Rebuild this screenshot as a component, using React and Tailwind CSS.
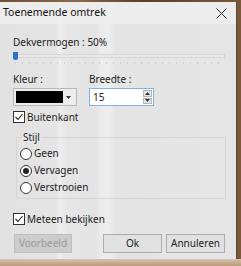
export default function App() {
  const font = { fontFamily: '"Segoe UI", "Noto Sans", "Open Sans", sans-serif' };
  const Check = () => (
    <div className="w-[12px] h-[12px] border border-[#333] bg-white flex items-center justify-center">
      <svg width="10" height="10" viewBox="0 0 10 10"><path d="M1.5 5 L4 7.5 L8.5 2" stroke="#222" strokeWidth="1.1" fill="none" /></svg>
    </div>
  );
  return (
    <div
      className="w-[241px] h-[266px] overflow-hidden bg-[linear-gradient(90deg,#6a5038_0%,#8a6a48_30%,#5a4028_60%,#7a5a3a_100%)] text-[10px] text-[#222]"
      style={font}
    >
      <div className="mt-[2px] w-[237px] h-[257px] flex flex-col border-r border-[#5a4a3a] bg-[linear-gradient(90deg,#e2e2e2_0px,#e4e4e4_55px,#eeeeee_60px,#e6e6e6_66px,#e3e3e3_95px,#ececec_102px,#ececec_110px,#e4e4e4_116px,#e5e5e5_100%)]">
        <div className="h-[22px] shrink-0 flex items-center justify-between pl-[3px] pr-[6px] bg-[#efefef]/80">
          <span className="text-[10.5px] text-[#111]">Toenemende omtrek</span>
          <svg width="11" height="11" viewBox="0 0 11 11" className="mr-[3px]">
            <path d="M0.5 0.5 L10.5 10.5 M10.5 0.5 L0.5 10.5" stroke="#333" strokeWidth="1" />
          </svg>
        </div>
        <div className="flex flex-col pl-[13px] pr-[11px] pt-[11px]">
          <div className="h-[14px] leading-[14px]">Dekvermogen : 50%</div>
          <div className="relative h-[14px] mt-[2px] shrink-0">
            <div className="absolute left-[1px] right-0 top-[3px] h-[4px] bg-[#e9e9e9] border border-[#d6d6d6]" />
            <div className="absolute left-[0px] top-[1px] w-[5px] h-[8px] bg-[#2f6fc8] rounded-b-[2px]" />
            <div className="absolute left-[2px] right-0 top-[11px] h-[2px] bg-[repeating-linear-gradient(90deg,#cfcfcf_0px,#cfcfcf_1px,transparent_1px,transparent_7px)]" />
          </div>
          <div className="flex mt-[7px] gap-[12px]">
            <div className="flex flex-col">
              <div className="h-[14px] leading-[14px]">Kleur :</div>
              <div className="mt-[2px] w-[64px] h-[18px] flex items-center border border-[#b8b8b8] bg-[#ececec] p-[2px]">
                <div className="w-[47px] h-[12px] bg-black" />
                <div className="flex-1 flex justify-center">
                  <svg width="5" height="3" viewBox="0 0 5 3"><path d="M0 0 L5 0 L2.5 3 Z" fill="#333" /></svg>
                </div>
              </div>
            </div>
            <div className="flex flex-col">
              <div className="h-[14px] leading-[14px]">Breedte :</div>
              <div className="mt-[2px] w-[65px] h-[18px] flex items-center border border-[#7eb4ea] bg-white">
                <span className="pl-[3px] flex-1">15</span>
                <div className="w-[11px] h-full flex flex-col gap-[1px] p-[1px]">
                  <div className="flex-1 bg-[#e5e5e5] border border-[#b5b5b5] flex items-center justify-center">
                    <svg width="5" height="3" viewBox="0 0 5 3"><path d="M0 3 L5 3 L2.5 0 Z" fill="#333" /></svg>
                  </div>
                  <div className="flex-1 bg-[#e5e5e5] border border-[#b5b5b5] flex items-center justify-center">
                    <svg width="5" height="3" viewBox="0 0 5 3"><path d="M0 0 L5 0 L2.5 3 Z" fill="#333" /></svg>
                  </div>
                </div>
              </div>
            </div>
          </div>
          <div className="flex items-center h-[12px] mt-[5px] gap-[2px]">
            <Check />
            <span>Buitenkant</span>
          </div>
          <div className="relative shrink-0 mt-[14px] ml-[3px] w-[210px] h-[62px] border border-[#d5d5d5] pt-[9px] pl-[3px]">
            <span className="absolute -top-[8px] left-[5px] px-[1px] leading-[14px] bg-[#e5e5e5]">Stijl</span>
            <div className="flex flex-col gap-[4px]">
              {[['Geen', false], ['Vervagen', true], ['Verstrooien', false]].map(([l, c]) => (
                <div key={l} className="flex items-center gap-[2px] h-[13px]">
                  <div className="w-[12px] h-[12px] rounded-full border border-[#333] bg-white flex items-center justify-center">
                    {c && <div className="w-[6px] h-[6px] rounded-full bg-[#222]" />}
                  </div>
                  <span>{l}</span>
                </div>
              ))}
            </div>
          </div>
          <div className="flex items-center h-[12px] mt-[14px] gap-[2px]">
            <Check />
            <span>Meteen bekijken</span>
          </div>
          <div className="flex mt-[9px] h-[19px]">
            <div className="ml-[1px] w-[58px] h-full flex items-center justify-center bg-[#cccccc] border border-[#bfbfbf] text-[#9a9a9a]">Voorbeeld</div>
            <div className="ml-[31px] w-[59px] h-full flex items-center justify-center bg-[#e1e1e1] border border-[#adadad]">Ok</div>
            <div className="ml-[4px] w-[59px] h-full flex items-center justify-center bg-[#e1e1e1] border border-[#adadad]">Annuleren</div>
          </div>
        </div>
      </div>
      <div className="h-[7px] bg-[linear-gradient(180deg,#d8c4b0,#b89878)]" />
    </div>
  );
}
